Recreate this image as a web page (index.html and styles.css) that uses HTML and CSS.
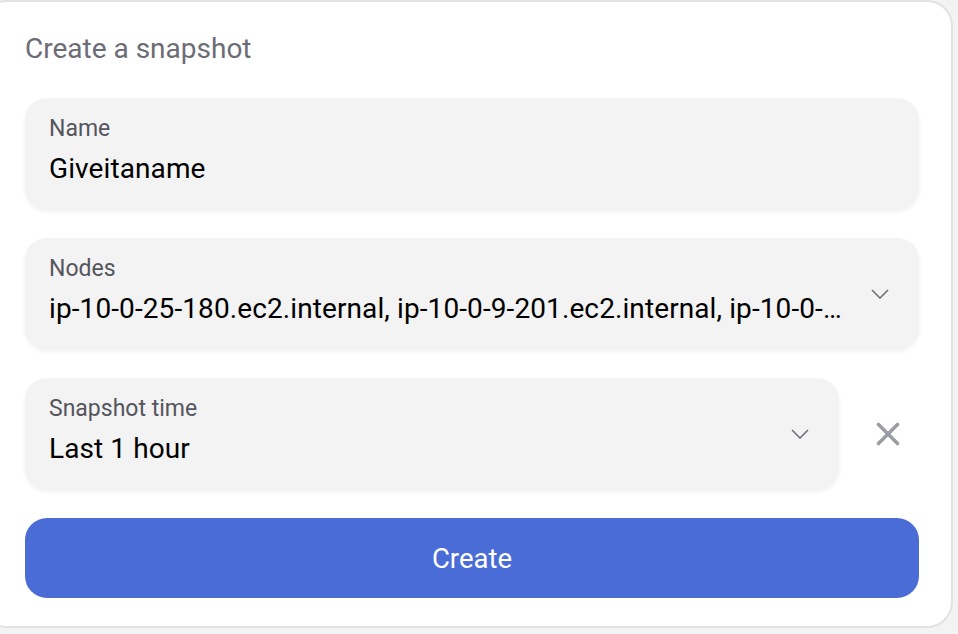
FILE: index.html
```html
<!DOCTYPE html>
<html>
<head>
<meta charset="utf-8">
<link rel="stylesheet" href="styles.css">
</head>
<body>
<div class="card">
  <h1 class="title">Create a snapshot</h1>
  <div class="field">
    <div class="label">Name</div>
    <div class="value">Giveitaname</div>
  </div>
  <div class="field select">
    <div class="field-body">
      <div class="label">Nodes</div>
      <div class="value">ip-10-0-25-180.ec2.internal, ip-10-0-9-201.ec2.internal, ip-10-0-…</div>
    </div>
    <svg class="chevron" width="18" height="10" viewBox="0 0 18 10"><path d="M1 1 L9 9 L17 1" fill="none" stroke="#707078" stroke-width="1.6"/></svg>
  </div>
  <div class="row">
    <div class="field select">
      <div class="field-body">
        <div class="label">Snapshot time</div>
        <div class="value">Last 1 hour</div>
      </div>
      <svg class="chevron" width="18" height="10" viewBox="0 0 18 10"><path d="M1 1 L9 9 L17 1" fill="none" stroke="#707078" stroke-width="1.6"/></svg>
    </div>
    <button class="clear" aria-label="Clear">
      <svg width="24" height="24" viewBox="0 0 24 24"><path d="M2.5 2.5 L21.5 21.5 M21.5 2.5 L2.5 21.5" fill="none" stroke="#9c9ca4" stroke-width="3.6" stroke-linecap="round"/></svg>
    </button>
  </div>
  <button class="create">Create</button>
</div>
</body>
</html>
```
FILE: styles.css
```css
html, body {
  margin: 0;
  padding: 0;
  background: #f3f3f3;
  font-family: Roboto, "Liberation Sans", sans-serif;
}
.card {
  box-sizing: border-box;
  margin: 0 5px 0 -20px;
  height: 628px;
  background: #fff;
  border: 2px solid #e2e2e2;
  border-radius: 26px;
  padding: 0 32px 0 43px;
  display: flex;
  flex-direction: column;
}
.title {
  margin: 0;
  padding-top: 30px;
  height: 96px;
  box-sizing: border-box;
  font-size: 28px;
  line-height: 34px;
  font-weight: 400;
  color: #6c6c76;
}
.field {
  box-sizing: border-box;
  height: 112px;
  background: #f3f3f3;
  border-radius: 22px;
  padding: 17px 24px 0 24px;
  box-shadow: 0 2px 4px rgba(0,0,0,0.06);
  margin-bottom: 28px;
  min-width: 0;
}
.select {
  display: flex;
  align-items: center;
  padding-top: 0;
  padding-right: 30px;
}
.field-body {
  flex: 1;
  min-width: 0;
  align-self: flex-start;
  padding-top: 17px;
}
.label {
  font-size: 23px;
  line-height: 28px;
  color: #55555e;
}
.value {
  margin-top: 9px;
  font-size: 28px;
  line-height: 34px;
  letter-spacing: 0.1px;
  color: #000;
  white-space: nowrap;
}
.chevron {
  flex: none;
  display: block;
  margin-left: 12px;
}
.row {
  display: flex;
  align-items: flex-start;
}
.row .field {
  flex: 1;
}
.clear {
  flex: none;
  width: 80px;
  height: 112px;
  border: 0;
  background: none;
  padding: 0 0 0 18px;
  display: flex;
  align-items: center;
  justify-content: center;
}
.create {
  height: 80px;
  border: 0;
  border-radius: 22px;
  background: #4a6cd6;
  color: #fff;
  font-family: Roboto, "Liberation Sans", sans-serif;
  font-size: 27.5px;
  padding: 0;
}
```
